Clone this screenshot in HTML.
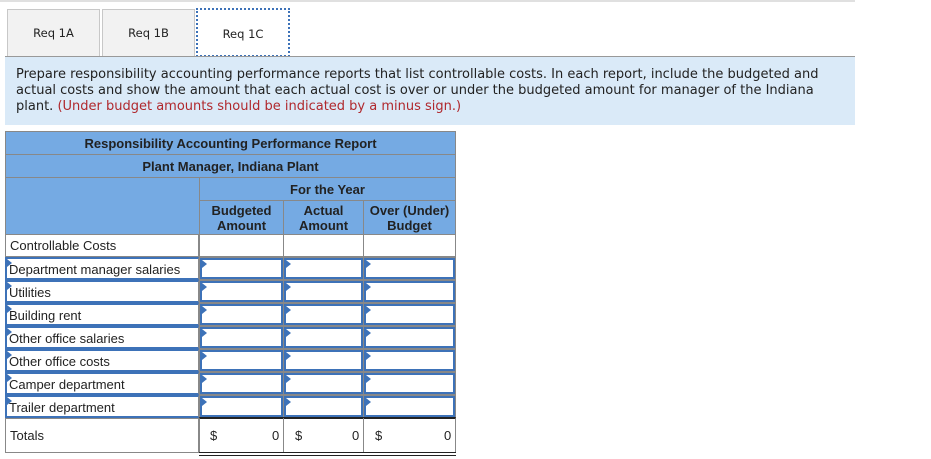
<!DOCTYPE html>
<html><head><style>
*{margin:0;padding:0;box-sizing:border-box}
body{width:931px;height:459px;background:#fff;position:relative;overflow:hidden;font-family:"Liberation Sans",Arial,sans-serif;}
.a{position:absolute}
.tab{position:absolute;top:9px;height:47px;background:#f2f2f2;border:1px solid #c8c8c8;border-bottom:none;font-family:"DejaVu Sans",Verdana,sans-serif;font-size:11.5px;color:#222;text-align:center;line-height:46px}
.hd{position:absolute;background:#75aae3;color:#222;font-size:13px;font-weight:bold;text-align:center;border:1px solid #888}
.lbl{position:absolute;left:5px;width:194px;height:23px;font-size:13px;color:#222;padding-left:4px;line-height:21px}
.in{position:absolute;height:23px;border:1px solid #888;}
.in i{position:absolute;left:0;top:0;right:0;bottom:0;border:2px solid #3d72b8}
.in b{position:absolute;left:2px;top:2px;width:0;height:0;border-top:4px solid transparent;border-bottom:4px solid transparent;border-left:5px solid #3d72b8}
.lbl b{position:absolute;left:0;top:0;width:0;height:0;border-top:4px solid transparent;border-bottom:4px solid transparent;border-left:5px solid #3d72b8}
</style></head><body>
<div class="a" style="left:0;top:0;width:855px;height:2px;background:#e0e0e0"></div>
<div class="tab" style="left:7px;width:93px">Req 1A</div>
<div class="tab" style="left:102px;width:93px">Req 1B</div>
<div class="tab" style="left:196px;width:94px;top:8px;height:49px;background:#fff;border:2px dotted #3d72b8;border-bottom:2px dotted #3d72b8;line-height:48px">Req 1C</div>
<div class="a" style="left:5px;top:56px;width:850px;height:1px;background:#999"></div>
<div class="a" style="left:5px;top:57px;width:850px;height:68px;background:#daeaf8;font-family:'DejaVu Sans',Verdana,sans-serif;font-size:13px;line-height:16px;color:#222;padding:10px 0 0 11px;white-space:nowrap">Prepare responsibility accounting performance reports that list controllable costs. In each report, include the budgeted and<br>actual costs and show the amount that each actual cost is over or under the budgeted amount for manager of the Indiana<br>plant. <span style="color:#b0282d">(Under budget amounts should be indicated by a minus sign.)</span></div>

<div class="hd" style="left:5px;top:131px;width:451px;height:24px;line-height:23px">Responsibility Accounting Performance Report</div>
<div class="hd" style="left:5px;top:154px;width:451px;height:24px;line-height:23px">Plant Manager, Indiana Plant</div>
<div class="hd" style="left:5px;top:177px;width:195px;height:58px"></div>
<div class="hd" style="left:199px;top:177px;width:257px;height:24px;line-height:23px;border-bottom:1px solid #222">For the Year</div>
<div class="hd" style="left:199px;top:200px;width:85px;height:35px;line-height:15px;padding-top:2px">Budgeted<br>Amount</div>
<div class="hd" style="left:283px;top:200px;width:81px;height:35px;line-height:15px;padding-top:2px">Actual<br>Amount</div>
<div class="hd" style="left:363px;top:200px;width:93px;height:35px;line-height:15px;padding-top:2px">Over (Under)<br>Budget</div>

<div class="lbl" style="top:234px;border:1px solid #888">Controllable Costs</div>
<div class="in" style="left:199px;top:234px;width:85px"></div>
<div class="in" style="left:283px;top:234px;width:81px"></div>
<div class="in" style="left:363px;top:234px;width:93px"></div>

<div class="lbl" style="top:257px;border:2px solid #3d72b8;border-right:1px solid #888;padding-left:2px"><b></b>Department manager salaries</div>
<div class="in" style="left:199px;top:257px;width:85px"><i></i><b></b></div><div class="in" style="left:283px;top:257px;width:81px"><i></i><b></b></div><div class="in" style="left:363px;top:257px;width:93px"><i></i><b></b></div>
<div class="lbl" style="top:280px;border:2px solid #3d72b8;border-right:1px solid #888;padding-left:2px"><b></b>Utilities</div>
<div class="in" style="left:199px;top:280px;width:85px"><i></i><b></b></div><div class="in" style="left:283px;top:280px;width:81px"><i></i><b></b></div><div class="in" style="left:363px;top:280px;width:93px"><i></i><b></b></div>
<div class="lbl" style="top:303px;border:2px solid #3d72b8;border-right:1px solid #888;padding-left:2px"><b></b>Building rent</div>
<div class="in" style="left:199px;top:303px;width:85px"><i></i><b></b></div><div class="in" style="left:283px;top:303px;width:81px"><i></i><b></b></div><div class="in" style="left:363px;top:303px;width:93px"><i></i><b></b></div>
<div class="lbl" style="top:326px;border:2px solid #3d72b8;border-right:1px solid #888;padding-left:2px"><b></b>Other office salaries</div>
<div class="in" style="left:199px;top:326px;width:85px"><i></i><b></b></div><div class="in" style="left:283px;top:326px;width:81px"><i></i><b></b></div><div class="in" style="left:363px;top:326px;width:93px"><i></i><b></b></div>
<div class="lbl" style="top:349px;border:2px solid #3d72b8;border-right:1px solid #888;padding-left:2px"><b></b>Other office costs</div>
<div class="in" style="left:199px;top:349px;width:85px"><i></i><b></b></div><div class="in" style="left:283px;top:349px;width:81px"><i></i><b></b></div><div class="in" style="left:363px;top:349px;width:93px"><i></i><b></b></div>
<div class="lbl" style="top:372px;border:2px solid #3d72b8;border-right:1px solid #888;padding-left:2px"><b></b>Camper department</div>
<div class="in" style="left:199px;top:372px;width:85px"><i></i><b></b></div><div class="in" style="left:283px;top:372px;width:81px"><i></i><b></b></div><div class="in" style="left:363px;top:372px;width:93px"><i></i><b></b></div>
<div class="lbl" style="top:395px;border:2px solid #3d72b8;border-right:1px solid #888;padding-left:2px"><b></b>Trailer department</div>
<div class="in" style="left:199px;top:395px;width:85px"><i></i><b></b></div><div class="in" style="left:283px;top:395px;width:81px"><i></i><b></b></div><div class="in" style="left:363px;top:395px;width:93px"><i></i><b></b></div>

<div class="lbl" style="top:418px;height:35px;line-height:33px;border:1px solid #888">Totals</div>
<div class="a" style="left:199px;top:417px;width:257px;height:36px;border-top:2px solid #222;border-left:1px solid #888;border-right:1px solid #888"></div>
<div class="a" style="left:283px;top:418px;width:1px;height:35px;background:#888"></div>
<div class="a" style="left:363px;top:418px;width:1px;height:35px;background:#888"></div>
<div class="a" style="left:199px;top:452px;width:257px;height:4px;border-top:1px solid #222;border-bottom:1px solid #222"></div>
<div class="a" style="left:210px;top:428px;font-size:13px;color:#222">$</div><div class="a" style="left:272px;top:428px;font-size:13px;color:#222">0</div>
<div class="a" style="left:295px;top:428px;font-size:13px;color:#222">$</div><div class="a" style="left:352px;top:428px;font-size:13px;color:#222">0</div>
<div class="a" style="left:375px;top:428px;font-size:13px;color:#222">$</div><div class="a" style="left:444px;top:428px;font-size:13px;color:#222">0</div>
</body></html>
